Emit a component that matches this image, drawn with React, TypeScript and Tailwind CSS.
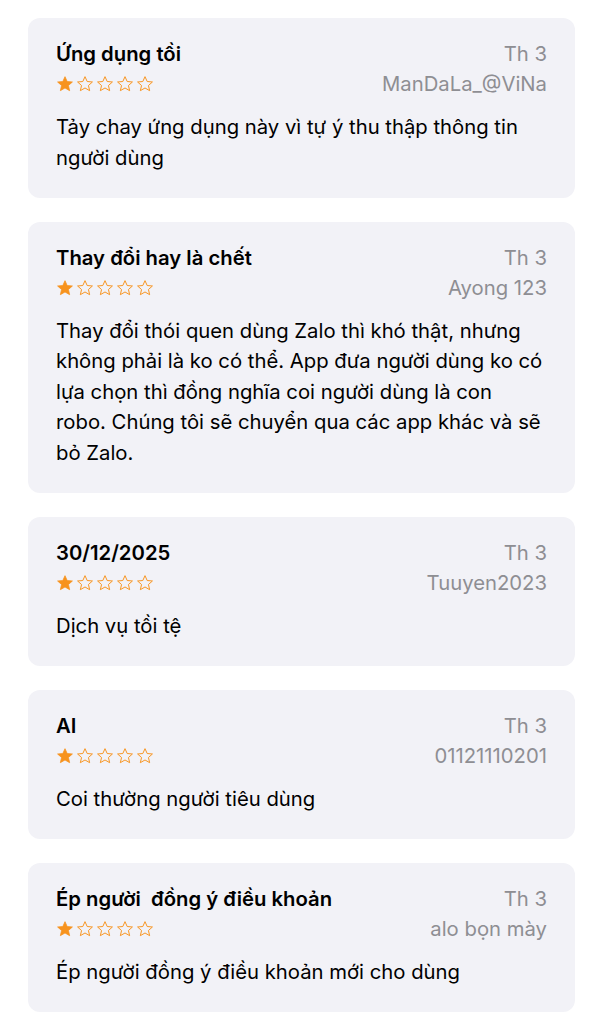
const reviews = [
  {
    title: "Ứng dụng tồi",
    date: "Th 3",
    author: "ManDaLa_@ViNa",
    body: "Tảy chay ứng dụng này vì tự ý thu thập thông tin người dùng",
  },
  {
    title: "Thay đổi hay là chết",
    date: "Th 3",
    author: "Ayong 123",
    body: "Thay đổi thói quen dùng Zalo thì khó thật, nhưng không phải là ko có thể. App đưa người dùng ko có lựa chọn thì đồng nghĩa coi người dùng là con robo. Chúng tôi sẽ chuyển qua các app khác và sẽ bỏ Zalo.",
  },
  {
    title: "30/12/2025",
    date: "Th 3",
    author: "Tuuyen2023",
    body: "Dịch vụ tồi tệ",
  },
  {
    title: "AI",
    date: "Th 3",
    author: "01121110201",
    body: "Coi thường người tiêu dùng",
  },
  {
    title: "Ép người  đồng ý điều khoản",
    date: "Th 3",
    author: "alo bọn mày",
    body: "Ép người đồng ý điều khoản mới cho dùng",
  },
];

function Star({ filled }: { filled: boolean }) {
  return (
    <svg width="18" height="18" viewBox="0 0 24 24">
      <path
        d="M12 2.2l2.9 6.5 7 .6-5.3 4.7 1.6 6.9L12 17.3l-6.2 3.6 1.6-6.9L2.1 9.3l7-.6z"
        fill={filled ? "#f7931e" : "none"}
        stroke="#f7931e"
        strokeWidth={filled ? 1 : 1.3}
        strokeLinejoin="round"
      />
    </svg>
  );
}

function ReviewCard({ review }: { review: (typeof reviews)[number] }) {
  return (
    <div className="rounded-xl bg-[#f2f2f7] px-7 pt-[21px] pb-[25px]">
      <div className="flex items-center justify-between">
        <h3 className="text-[20.3px] leading-[30px] font-semibold text-black whitespace-pre">
          {review.title}
        </h3>
        <span className="text-[20.3px] leading-[30px] text-[#8e8e93]">{review.date}</span>
      </div>
      <div className="flex items-center justify-between">
        <div className="flex gap-[2px]">
          {[0, 1, 2, 3, 4].map((i) => (
            <Star key={i} filled={i === 0} />
          ))}
        </div>
        <span className="text-[20.3px] leading-[30px] text-[#8e8e93]">{review.author}</span>
      </div>
      <p className="mt-[13px] text-[20.3px] leading-[30.5px] text-black">{review.body}</p>
    </div>
  );
}

export default function App() {
  return (
    <div className="min-h-screen bg-white px-7 pt-[18px] font-['Inter','Noto_Sans',sans-serif]">
      <div className="flex flex-col gap-[23.5px]">
        {reviews.map((review) => (
          <ReviewCard key={review.author} review={review} />
        ))}
      </div>
    </div>
  );
}
